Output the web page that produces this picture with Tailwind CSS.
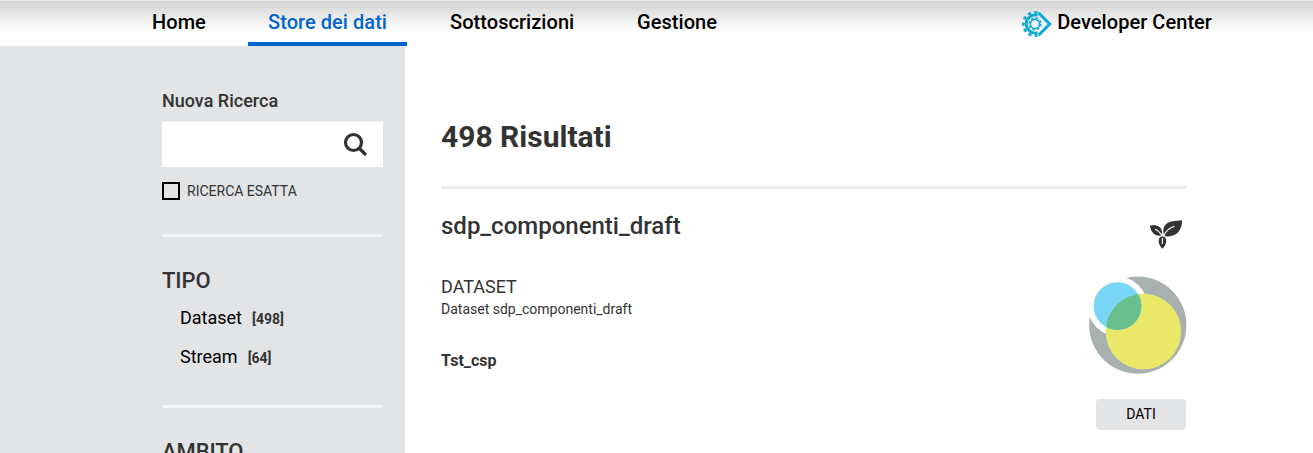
<!DOCTYPE html>
<html lang="it">
<head>
<meta charset="utf-8">
<title>Store dei dati</title>
<script src="https://cdn.jsdelivr.net/npm/@tailwindcss/browser@4"></script>
</head>
<body class="h-[453px] overflow-hidden bg-white font-['Roboto',sans-serif] text-[#333]">
<header class="flex h-[46px] border-t border-[#e6ebe9] bg-linear-to-b from-[#d3d3d3] to-white to-[30px] pl-[132px] text-[20px] leading-[42px] font-medium tracking-[0.05px] text-black">
  <nav class="flex gap-[23px] whitespace-nowrap">
    <a class="h-[45px] w-[93px] pl-5">Home</a>
    <a class="h-[45px] w-[159px] border-b-4 border-[#0065cc] pl-5 text-[#0065cc]">Store dei dati</a>
    <a class="h-[45px] w-[164px] pl-5">Sottoscrizioni</a>
    <a class="h-[45px] w-[120px] pl-5">Gestione</a>
  </nav>
  <a class="mr-[101px] ml-auto flex whitespace-nowrap">
    <svg class="mt-[10px] mr-[5px] h-[26px] w-[30px]" viewBox="0 0 30 26" fill="none" stroke="#0daad2">
      <path d="M15.5 4.3A9 9 0 1 0 15.5 21.7" stroke-width="2.8"/>
      <path d="M15.5 1.7A11.6 11.6 0 1 0 15.5 24.3" stroke-width="2.8" stroke-dasharray="3.3 3.1"/>
      <circle cx="13" cy="13" r="4.6" stroke-width="1.6"/>
      <circle cx="13" cy="13" r="6" stroke-width="1.4" stroke-dasharray="2.3 2.41"/>
      <path d="M16.5 1.8 27.7 13 16.5 24.2" stroke-width="3"/>
    </svg>
    <span>Developer Center</span>
  </a>
</header>
<div class="flex h-[407px]">
  <aside class="w-[405px] bg-[#e2e4e6] pr-[22px] pl-[162px]">
    <h2 class="pt-[43px] text-[18px] leading-6 font-medium">Nuova Ricerca</h2>
    <div class="mt-2 flex h-[46px] items-center justify-end border-t border-[#f0f1f2] bg-white pr-[15px]">
      <svg class="mr-px mb-px size-6" viewBox="0 0 24 24" fill="none" stroke="#333" stroke-linecap="round"><circle cx="10.5" cy="10.5" r="8" stroke-width="3.2"/><path d="M16.5 16.5 22 22" stroke-width="3.2"/></svg>
    </div>
    <label class="mt-[15px] flex h-[18px] items-center gap-[7px] text-[14px] leading-[18px]"><span class="size-[18px] border-2 border-black"></span>RICERCA ESATTA</label>
    <section class="mt-[34px] border-t-3 border-[#f3f4f6] pt-[28px]">
      <h3 class="text-[22px] leading-8 font-medium tracking-[-0.1px]">TIPO</h3>
      <div class="mt-[9px] flex h-6 items-baseline gap-[10px] pl-[18px] text-[18px] leading-6 text-black">Dataset <b class="text-[14px] font-bold text-[#333]">[498]</b></div>
      <div class="mt-[15px] flex h-6 items-baseline gap-[10px] pl-[18px] text-[18px] leading-6 text-black">Stream <b class="text-[14px] font-bold text-[#333]">[64]</b></div>
    </section>
    <section class="mt-[36px] border-t-3 border-[#f3f4f6] pt-[28px]">
      <h3 class="text-[22px] leading-8 font-medium tracking-[-0.1px]">AMBITO</h3>
    </section>
  </aside>
  <main class="ml-9 w-[746px]">
    <h1 class="pt-[71px] text-[30px] leading-10 font-bold">498 Risultati</h1>
    <article class="mt-[29px] flex justify-between border-t-3 border-[#ebeeee]">
      <div>
        <h2 class="mt-[21px] text-[24px] leading-8 font-medium">sdp_componenti_draft</h2>
        <p class="mt-[33px] text-[18px] leading-6">DATASET</p>
        <p class="text-[14px] leading-5">Dataset sdp_componenti_draft</p>
        <p class="mt-[32px] text-[16px] leading-5 font-bold">Tst_csp</p>
      </div>
      <div class="flex w-[98px] flex-col">
        <svg class="mt-[31px] mr-[5px] h-[30px] w-[32px] self-end" viewBox="0 0 32 30" fill="#333">
          <path d="M32 .3C32.2 9 27.5 17.3 16.5 16.4 15.6 16.3 15 15.8 14.5 15.5 11.5 10 14 3 21.5 1.4 25 .7 29 1 32 .3Z"/>
          <path d="M0 5.3C.3 11 4 16.3 10.6 15.8 11.3 15.5 11.8 14.6 12.1 13.8 12.3 9.5 10.2 6.2 6.2 5.5 4 5.1 2 5.6 0 5.3Z"/>
          <path d="M12.4 16.6C15.3 16.3 16.5 19 16.2 22 15.9 25 14 27 12.4 28.8 10.8 27 8.9 25 8.7 22 8.5 19 9.6 16.4 12.4 16.6Z"/>
          <path d="M24.5 6.2Q17 8.5 13.6 15.8M5 9.3Q9.5 11 12 16M12.4 18V24" fill="none" stroke="#fff" stroke-width="1.1"/>
        </svg>
        <svg class="mt-[26px] size-[98px]" viewBox="0 0 98 98">
          <circle cx="48.8" cy="49.2" r="48.6" fill="#a9b0b0"/>
          <circle cx="28.5" cy="30.2" r="29.8" fill="#fff"/>
          <circle cx="54.4" cy="55.5" r="37.8" fill="#e9e868"/>
          <circle cx="28.5" cy="30.2" r="23.9" fill="#79d6f7"/>
          <clipPath id="lens"><circle cx="28.5" cy="30.2" r="23.9"/></clipPath>
          <circle cx="54.4" cy="55.5" r="37.8" fill="#68c08e" clip-path="url(#lens)"/>
        </svg>
        <span class="mt-[25px] mr-px h-[31px] w-[90px] self-end rounded bg-[#e2e4e6] text-center text-[14px] leading-[30px] text-black">DATI</span>
      </div>
    </article>
  </main>
</div>
</body>
</html>
